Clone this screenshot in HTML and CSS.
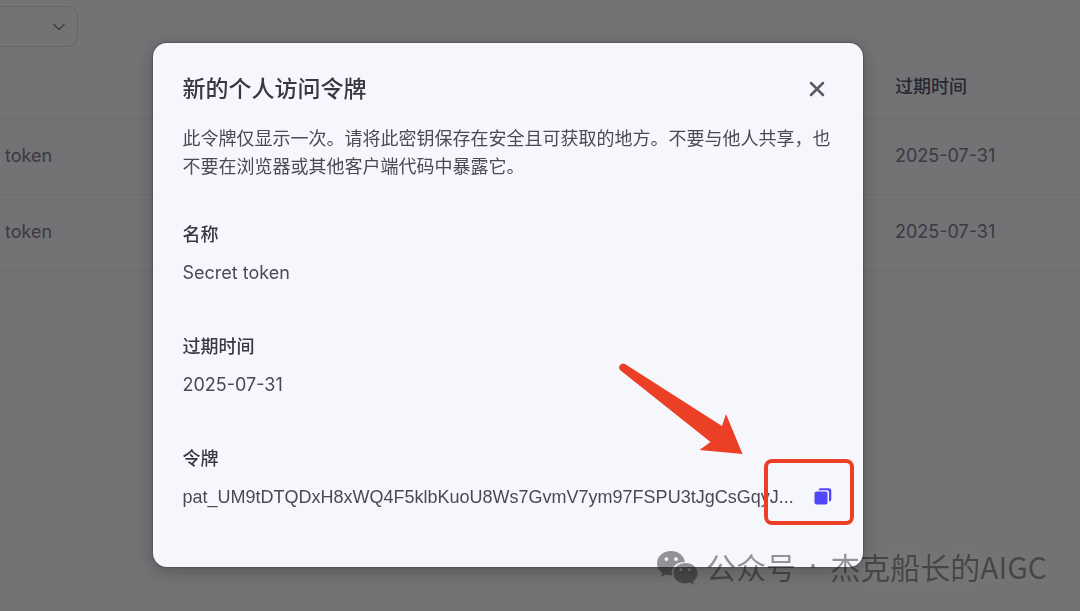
FILE: index.html
```html
<!DOCTYPE html>
<html lang="zh-CN">
<head>
	<meta charset="utf-8" />
	<title>个人访问令牌</title>
	<link rel="stylesheet" href="styles.css">
</head>
<body>
	<div class="page">
		<div class="filter">
			<select class="filter-select" aria-label="筛选">
				<option value=""></option>
			</select>
			<svg class="filter-arrow" width="14" height="14" viewBox="0 0 14 14"><path d="M2 4.5 L7 9.5 L12 4.5" /></svg>
		</div>
		<table class="tokens">
			<tr>
				<th class="col-name"></th>
				<th>过期时间</th>
			</tr>
			<tr>
				<td>token</td>
				<td>2025-07-31</td>
			</tr>
			<tr>
				<td>token</td>
				<td>2025-07-31</td>
			</tr>
		</table>
	</div>

	<div class="mask">
		<div class="modal" role="dialog" aria-labelledby="modal-title">
			<div class="modal-header">
				<h1 class="modal-title" id="modal-title">新的个人访问令牌</h1>
				<button class="icon-button" type="button" aria-label="关闭">
					<svg width="18" height="18" viewBox="0 0 18 18"><path class="close-icon" d="M3 3 L15 15 M15 3 L3 15" /></svg>
				</button>
			</div>
			<p class="modal-text">此令牌仅显示一次。请将此密钥保存在安全且可获取的地方。不要与他人共享，也不要在浏览器或其他客户端代码中暴露它。</p>
			<dl class="fields">
				<div class="field">
					<dt>名称</dt>
					<dd>Secret token</dd>
				</div>
				<div class="field">
					<dt>过期时间</dt>
					<dd>2025-07-31</dd>
				</div>
				<div class="field">
					<dt>令牌</dt>
					<dd class="token-row">
						<span class="token-value">pat_UM9tDTQDxH8xWQ4F5klbKuoU8Ws7GvmV7ym97FSPU3tJgCsGqyJ...</span>
						<button class="icon-button" type="button" aria-label="复制">
							<svg width="18" height="18" viewBox="0 0 18 18">
								<rect class="copy-icon" x="0.5" y="3.5" width="13" height="13" rx="2" />
								<path class="copy-icon" d="M4.500 2.300 Q4.500 0.300 6.500 0.300 H15 Q17.300 0.300 17.300 2.600 V11.500 Q17.300 13.500 15 13.500 V4.300 Q15 2.300 13 2.300 Z" />
							</svg>
						</button>
					</dd>
				</div>
			</dl>
			<svg class="arrow" width="128" height="96" viewBox="0 0 128 96">
				<path d="M8 3 L105 65 L109 53 L125.500 93 L82.500 89 L93.500 81 L3 9 A4 4 0 0 1 8 3 Z" />
			</svg>
			<div class="highlight"></div>
		</div>
	</div>

	<div class="watermark">
		<svg width="42" height="36" viewBox="0 0 42 36">
			<path fill-rule="evenodd" d="M15 1 C7 1 1 6.500 1 13.500 C1 17.500 3 21 6.300 23.200 L5 27 L9.800 24.600 C11.500 25.200 14 25.600 16 25.500 C14.300 18 20.500 11.600 29 12 C28 5.500 22.200 1 15 1 Z M10.400 7.200 A1.900 1.900 0 1 1 10.400 11 A1.900 1.900 0 1 1 10.400 7.200 Z M20 7.200 A1.900 1.900 0 1 1 20 11 A1.900 1.900 0 1 1 20 7.200 Z" />
			<path fill-rule="evenodd" d="M29.500 13 C22.500 13 17.500 17.500 17.500 23.200 C17.500 29 22.500 33.300 29.500 33.300 C31.200 33.300 32.600 33 34 32.600 L38 34.600 L37 31.200 C39.800 29.400 41.500 26.500 41.500 23.200 C41.500 17.500 36.500 13 29.500 13 Z M24.800 18 A1.600 1.600 0 1 1 24.800 21.200 A1.600 1.600 0 1 1 24.800 18 Z M33.200 18 A1.600 1.600 0 1 1 33.200 21.200 A1.600 1.600 0 1 1 33.200 18 Z" />
		</svg>
		<div class="watermark-text">
			<span>公众号</span>
			<span class="dot">·</span>
			<span>杰克船长的AIGC</span>
		</div>
	</div>
</body>
</html>
```
FILE: styles.css
```css
body
{
	margin: 0;
	background-color: #FAFAFF;
	color: #7D7D90;
	font-family: Inter, "Noto Sans CJK SC", sans-serif;
	font-size: 18px;
	line-height: 28px;
}

.page
{
	height: 100vh;
	overflow: hidden;
}

.filter
{
	display: flex;
	align-items: center;
	margin-top: 6px;
}

.filter-select
{
	appearance: none;
	box-sizing: border-box;
	width: 78px;
	height: 41px;
	border: 1px solid #DEDEE4;
	border-left: none;
	border-radius: 0 10px 10px 0;
	background: none;
}

.filter-arrow
{
	margin-left: -26px;
	fill: none;
	stroke: #85858C;
	stroke-width: 1.5;
	stroke-linecap: round;
	stroke-linejoin: round;
}

.tokens
{
	width: 100%;
	margin-top: 10px;
	border-collapse: collapse;
	table-layout: fixed;
}

	.tokens th, .tokens td
	{
		box-sizing: border-box;
		height: 76px;
		padding: 0 5px;
		border-bottom: 1px solid #ECECF0;
		text-align: left;
	}

	.tokens th
	{
		height: 61px;
		color: #55556A;
		font-weight: 500;
	}

	.tokens .col-name
	{
		width: 890px;
	}

.mask
{
	position: fixed;
	inset: 0;
	display: flex;
	align-items: center;
	justify-content: center;
	padding: 0 65px 2px 0;
	background-color: rgba(4, 4, 4, 0.55);
}

.modal
{
	position: relative;
	box-sizing: border-box;
	width: 710px;
	padding: 30px 30px 56px;
	border-radius: 14px;
	background-color: #F6F7FC;
	box-shadow: 0 4px 18px rgba(0, 0, 0, 0.25), 0 0 2px rgba(0, 0, 0, 0.5);
	color: #4A4A55;
}

.modal-header
{
	display: flex;
	align-items: center;
	justify-content: space-between;
	padding-right: 7px;
}

.modal-title
{
	margin: 0;
	color: #383743;
	font-size: 23px;
	font-weight: 500;
	line-height: 32px;
}

.modal-text
{
	margin: 20px 0 0;
}

.icon-button
{
	display: flex;
	padding: 0;
	border: none;
	background: none;
	cursor: pointer;
}

.close-icon
{
	fill: none;
	stroke: #5A5A64;
	stroke-width: 2.5;
	stroke-linecap: round;
}

.copy-icon
{
	fill: #5147FF;
}

.fields
{
	display: flex;
	flex-direction: column;
	gap: 46px;
	margin: 40px 0 0;
}

	.fields dt
	{
		color: #383743;
		font-weight: 500;
	}

	.fields dd
	{
		margin: 10px 0 0;
	}

	.fields .token-row
	{
		display: flex;
		align-items: center;
		gap: 20px;
	}

.token-value
{
	font-family: "Liberation Sans", Arial, sans-serif;
}

.arrow
{
	position: absolute;
	right: 118px;
	bottom: 110px;
	fill: #EB4025;
}

.highlight
{
	position: absolute;
	right: 9px;
	bottom: 42px;
	box-sizing: border-box;
	width: 90px;
	height: 66px;
	border: 4px solid #EB4025;
	border-radius: 8px;
}

.watermark
{
	position: fixed;
	right: 33px;
	bottom: 25px;
	display: flex;
	align-items: flex-end;
	gap: 8px;
	opacity: 0.42;
	color: #0A0A0A;
	fill: #0A0A0A;
	font-family: "Noto Sans CJK SC", sans-serif;
	font-size: 30px;
	line-height: 40px;
	text-shadow: 0 0 20px rgba(255, 255, 255, 0.2);
}

.watermark-text
{
	display: flex;
	gap: 13px;
}

	.watermark-text .dot
	{
		font-family: "Noto Sans", sans-serif;
	}
```
